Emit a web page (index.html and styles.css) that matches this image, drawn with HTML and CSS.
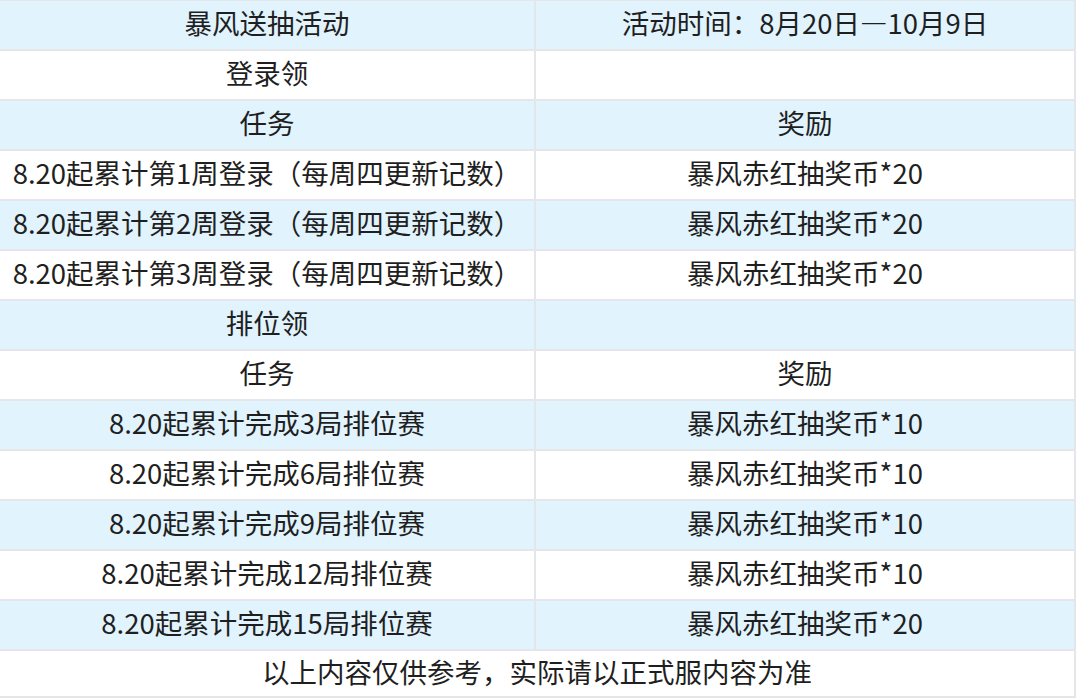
FILE: index.html
```html
<!DOCTYPE html>
<html lang="zh-CN">
<head>
<meta charset="utf-8">
<title>暴风送抽活动</title>
<link rel="stylesheet" href="styles.css">
</head>
<body>
<div class="sheet">
  <div class="cell blue">暴风送抽活动</div><div class="cell blue">活动时间：8月20日—10月9日</div>
  <div class="cell">登录领</div><div class="cell"></div>
  <div class="cell blue">任务</div><div class="cell blue">奖励</div>
  <div class="cell">8.20起累计第1周登录（每周四更新记数）</div><div class="cell">暴风赤红抽奖币*20</div>
  <div class="cell blue">8.20起累计第2周登录（每周四更新记数）</div><div class="cell blue">暴风赤红抽奖币*20</div>
  <div class="cell">8.20起累计第3周登录（每周四更新记数）</div><div class="cell">暴风赤红抽奖币*20</div>
  <div class="cell blue">排位领</div><div class="cell blue"></div>
  <div class="cell">任务</div><div class="cell">奖励</div>
  <div class="cell blue">8.20起累计完成3局排位赛</div><div class="cell blue">暴风赤红抽奖币*10</div>
  <div class="cell">8.20起累计完成6局排位赛</div><div class="cell">暴风赤红抽奖币*10</div>
  <div class="cell blue">8.20起累计完成9局排位赛</div><div class="cell blue">暴风赤红抽奖币*10</div>
  <div class="cell">8.20起累计完成12局排位赛</div><div class="cell">暴风赤红抽奖币*10</div>
  <div class="cell blue">8.20起累计完成15局排位赛</div><div class="cell blue">暴风赤红抽奖币*20</div>
  <div class="cell footer">以上内容仅供参考，实际请以正式服内容为准</div>
</div>
</body>
</html>
```
FILE: styles.css
```css
html, body {
  margin: 0;
  padding: 0;
  background: #ffffff;
}
body {
  font-family: "Noto Sans CJK SC", "Noto Sans", sans-serif;
  color: #1f1f1f;
  width: 1080px;
  height: 698px;
  overflow: hidden;
}
.sheet {
  width: 1076px;
  display: grid;
  grid-template-columns: 536px 540px;
  grid-auto-rows: 50px;
  border-top: 1px solid #e4e6e9;
}
.cell {
  box-sizing: border-box;
  border-right: 2px solid #e4e6e9;
  border-bottom: 2px solid #e4e6e9;
  display: flex;
  align-items: center;
  justify-content: center;
  font-size: 27.5px;
  line-height: 1;
  white-space: nowrap;
  background: #ffffff;
  padding-bottom: 4px;
}
.blue {
  background: #e1f3fd;
}
.footer {
  grid-column: 1 / span 2;
  height: 47px;
}
```
